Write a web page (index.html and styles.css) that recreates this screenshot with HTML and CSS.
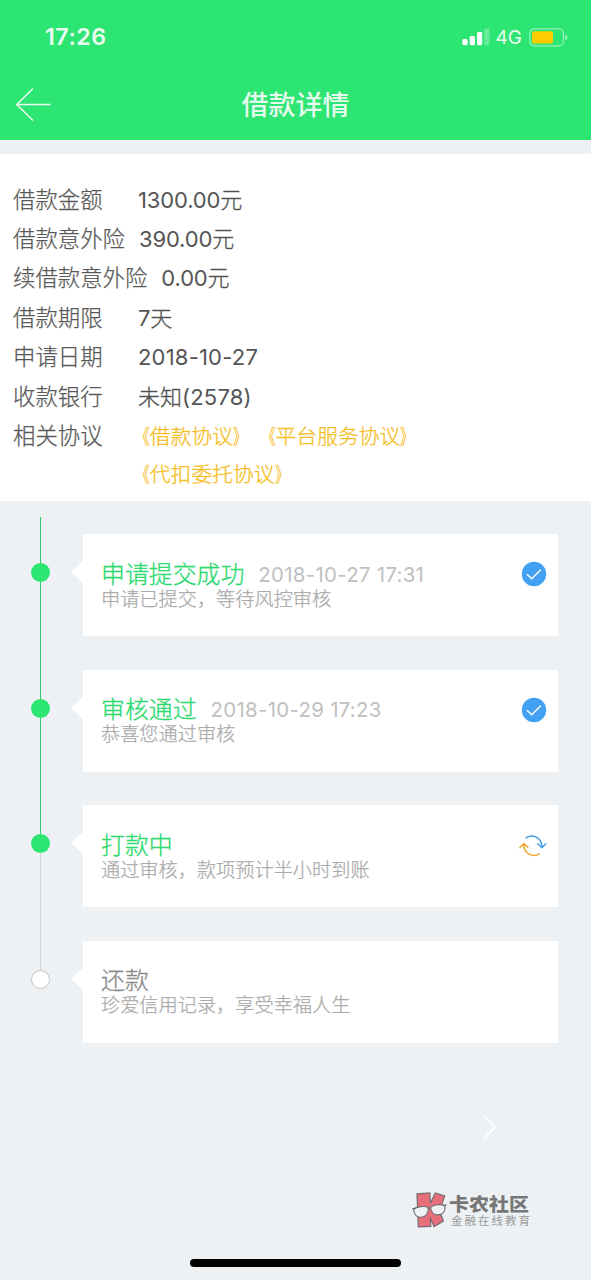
FILE: index.html
```html
<!DOCTYPE html>
<html lang="zh-CN">
<head>
<meta charset="utf-8">
<title>借款详情</title>
<link rel="stylesheet" href="styles.css">
</head>
<body>
<div class="app">
  <header class="header">
    <div class="status">
      <span class="clock">17:26</span>
      <div class="indicators">
        <svg class="signal" width="28" height="18" viewBox="0 0 28 18"><g fill="#fff"><rect x="0.4" y="11" width="5.2" height="6.2" rx="1.4"/><rect x="7.7" y="8" width="5.2" height="9.2" rx="1.4"/><rect x="15" y="4" width="5.2" height="13.2" rx="1.4"/><rect x="22.3" y="0.5" width="5.2" height="16.7" rx="1.4" opacity=".28"/></g></svg>
        <span class="network">4G</span>
        <svg class="battery" width="40" height="19" viewBox="0 0 40 19"><rect x=".8" y=".8" width="33.6" height="17" rx="4.5" fill="none" stroke="#fff" stroke-opacity=".5" stroke-width="1.2"/><rect x="3" y="3.2" width="21" height="12.2" rx="2" fill="#fc0"/><path d="M36.3 6.5q2.2.8 2.2 3t-2.2 3z" fill="#fff" opacity=".55"/></svg>
      </div>
    </div>
    <nav class="nav">
      <svg class="back" width="36" height="34" viewBox="0 0 36 34"><path d="M34.5 16.5H.8M17 .5.8 16.5l16.2 16" fill="none" stroke="#fff" stroke-opacity=".9" stroke-width="1.5"/></svg>
      <h1 class="title">借款详情</h1>
    </nav>
  </header>

  <section class="details">
    <div class="row"><span class="label">借款金额</span><span class="value"><b>1300.00</b>元</span></div>
    <div class="row"><span class="label">借款意外险</span><span class="value"><b>390.00</b>元</span></div>
    <div class="row"><span class="label">续借款意外险</span><span class="value"><b>0.00</b>元</span></div>
    <div class="row"><span class="label">借款期限</span><span class="value"><b>7</b>天</span></div>
    <div class="row"><span class="label">申请日期</span><span class="value"><b class="date">2018-10-27</b></span></div>
    <div class="row"><span class="label">收款银行</span><span class="value">未知<b class="date">(2578)</b></span></div>
    <div class="row"><span class="label">相关协议</span><span class="links"><a><i class="open">《</i>借款协议<i class="close">》</i></a><a><i class="open">《</i>平台服务协议<i class="close">》</i></a></span></div>
    <div class="row row-last"><span class="label"></span><span class="links"><a><i class="open">《</i>代扣委托协议<i class="close">》</i></a></span></div>
  </section>

  <main class="timeline">
    <div class="step">
      <div class="rail"><i class="line"></i><i class="dot"></i><i class="line"></i></div>
      <article class="card">
        <svg class="tip" width="13" height="24" viewBox="0 0 13 24"><path d="M13 0v24L0 12z" fill="#fff"/></svg>
        <div class="text"><div class="head"><h2>申请提交成功</h2><time>2018-10-27 17:31</time></div><p>申请已提交，等待风控审核</p></div>
        <svg class="state" width="26" height="26" viewBox="0 0 26 26"><circle cx="13" cy="13" r="12.2" fill="#42a1f3"/><path d="m6 13.2 4.7 4.5 9.1-9" fill="none" stroke="#fff" stroke-width="1.5"/></svg>
      </article>
    </div>
    <div class="step">
      <div class="rail"><i class="line"></i><i class="dot"></i><i class="line"></i></div>
      <article class="card">
        <svg class="tip" width="13" height="24" viewBox="0 0 13 24"><path d="M13 0v24L0 12z" fill="#fff"/></svg>
        <div class="text"><div class="head"><h2>审核通过</h2><time>2018-10-29 17:23</time></div><p>恭喜您通过审核</p></div>
        <svg class="state" width="26" height="26" viewBox="0 0 26 26"><circle cx="13" cy="13" r="12.2" fill="#42a1f3"/><path d="m6 13.2 4.7 4.5 9.1-9" fill="none" stroke="#fff" stroke-width="1.5"/></svg>
      </article>
    </div>
    <div class="step">
      <div class="rail"><i class="line"></i><i class="dot"></i><i class="line line-pending"></i></div>
      <article class="card">
        <svg class="tip" width="13" height="24" viewBox="0 0 13 24"><path d="M13 0v24L0 12z" fill="#fff"/></svg>
        <div class="text"><div class="head"><h2>打款中</h2></div><p>通过审核，款项预计半小时到账</p></div>
        <svg class="state" width="28" height="27" viewBox="0 -1 28 27" fill="none" stroke-width="1.5" stroke-linecap="round" stroke-linejoin="round"><path d="M7 4.8C13 .8 23 4 22.9 14.3M18.7 10.8l4.2 3.8 4-3.8" stroke="#4a9ee8"/><path d="M20.3 20.8C14 24.8 4.7 21 4.8 11.3M.9 14.6l3.9-4 4 3.6" stroke="#f0a52e"/></svg>
      </article>
    </div>
    <div class="step">
      <div class="rail"><i class="line line-pending"></i><i class="dot dot-pending"></i></div>
      <article class="card card-pending">
        <svg class="tip" width="13" height="24" viewBox="0 0 13 24"><path d="M13 0v24L0 12z" fill="#fff"/></svg>
        <div class="text"><div class="head"><h2>还款</h2></div><p>珍爱信用记录，享受幸福人生</p></div>
      </article>
    </div>
  </main>

  <footer class="footer">
    <svg class="next" width="14" height="26" viewBox="0 0 14 26"><path d="m1 1.5 11 11.3L1 24.5" fill="none" stroke="#fff" stroke-width="1.8"/></svg>
    <div class="brand">
      <svg class="logo" width="35" height="37" viewBox="0 0 35 37"><path d="M5 1.8 17.8 1l.7 10.2L23.2 1l9.5 3-5.3 15.3 4.1 9.8-9.4 5.5-3.8-8.8.5 8.5-12.5.5z" fill="#e66f7b" stroke="#746b70" stroke-width="1.2"/><path d="M1.5 17.5c3-3.3 11-3.7 14.7-2 .7 5-2.4 9.6-7 9.8-4.6.2-7-3-7.7-7.8zM18.5 15.2c3.3-2.7 10.6-3.5 14.5-1.3.5 5.7-2.2 8.9-6.8 9-4.2.1-7.1-3-7.7-7.7z" fill="#eef2f5" stroke="#6f6b70" stroke-width="1.1"/><path d="m.5 17 3-.8m12.7.4 2.5-.8m12.5-2.5 3.3-.2" fill="none" stroke="#6f6b70" stroke-width="1.4"/></svg>
      <div class="brand-text"><strong>卡农社区</strong><span>金融在线教育</span></div>
    </div>
    <div class="home"></div>
  </footer>
</div>
</body>
</html>
```
FILE: styles.css
```css
* { box-sizing: border-box; }
body { margin: 0; background: #fff; font-family: Inter, "Noto Sans CJK SC", sans-serif; }
h1, h2, p { margin: 0; font-weight: 300; }
svg { display: block; flex: none; }

.app { width: 591px; height: 1280px; background: #edf1f4; display: flex; flex-direction: column; overflow: hidden; }

.header { height: 140px; background: #2de573; color: #fff; flex: none; }
.status { height: 72px; padding: 2px 22px 0 45px; display: flex; align-items: center; justify-content: space-between; }
.clock { font-size: 23.2px; font-weight: 600; letter-spacing: .5px; opacity: .9; }
.indicators { display: flex; align-items: center; }
.network { font-size: 19px; margin: 0 7px 0 6px; opacity: .9; }
.nav { height: 66px; padding-left: 16px; display: grid; grid-template-columns: 36px 1fr 52px; align-items: center; }
.title { font-size: 27px; line-height: 40px; padding-top: 2px; font-weight: 500; text-align: center; opacity: .88; }

.details { margin-top: 14px; height: 347px; padding: 26px 14px 0 13px; background: #fff; flex: none; color: #555; }
.row { height: 39.4px; display: flex; align-items: center; font-size: 22.4px; line-height: 38px; white-space: nowrap; }
.row-last { height: 37px; }
.label { min-width: 111px; margin-right: 14px; font-weight: 300; color: #585858; -webkit-text-stroke: .25px #585858; }
.value { font-size: 22px; font-weight: 300; color: #505050; -webkit-text-stroke: .3px #505050; }
.value b { font-weight: 380; color: #555; letter-spacing: -.15px; -webkit-text-stroke: 0; }
.value .date { letter-spacing: .2px; }
.links { display: flex; gap: 1px; padding-top: 2px; font-size: 20.8px; font-weight: 300; color: #f6be26; -webkit-text-stroke: .3px #f6be26; margin-left: -9px; }
.links i { display: inline-block; font-style: normal; }
.links .open { transform-origin: right; transform: scaleX(.7); }
.links .close { transform-origin: left; transform: scaleX(.66); }

.timeline { padding: 16px 33px 0 31px; flex: none; }
.step { height: 135.5px; display: grid; grid-template-columns: 19px 475px; column-gap: 33px; }
.rail { display: flex; flex-direction: column; align-items: center; }
.line { width: 1.5px; flex: 1; background: #2bcc6b; }
.rail .line:first-child { flex: none; height: 46px; }
.rail .line-pending { background: #d0d2d4; }
.dot { width: 19px; height: 19px; border-radius: 50%; background: #2de573; flex: none; }
.dot-pending { background: #fff; border: 1px solid #c5c5c5; }
.card { position: relative; height: 102px; margin-top: 17px; padding: 27px 12px 0 18px; background: #fff; display: flex; justify-content: space-between; align-items: flex-start; }
.tip { position: absolute; left: -12px; top: 26px; }
.head { display: flex; align-items: center; gap: 14px; height: 27.5px; }
h2 { font-size: 23.9px; line-height: 28px; color: #2bd96e; -webkit-text-stroke: .3px #2bd96e; }
time { font-size: 20.4px; line-height: 26px; letter-spacing: .3px; color: #c0c0c0; }
.card p { font-size: 19.2px; line-height: 21px; color: #aaa; -webkit-text-stroke: .25px #aaa; }
.card-pending h2 { color: #8a8a8a; -webkit-text-stroke-color: #8a8a8a; }
.state { margin-right: -.5px; }

.footer { flex: 1; display: flex; flex-direction: column; }
.next { margin: 55.4px 0 0 483px; }
.brand { display: flex; margin: 52px 0 0 412px; gap: 2px; }
.brand-text { display: flex; flex-direction: column; color: #777; }
.brand-text strong { font-size: 20px; line-height: 23px; font-weight: 900; transform: translateY(1.5px) scaleY(.92); }
.brand-text span { font-size: 11.5px; line-height: 13px; letter-spacing: 2px; color: #999; padding-left: 2px; }
.home { width: 211px; height: 8px; border-radius: 4px; background: #000; margin: auto 0 13px 190px; }
```
